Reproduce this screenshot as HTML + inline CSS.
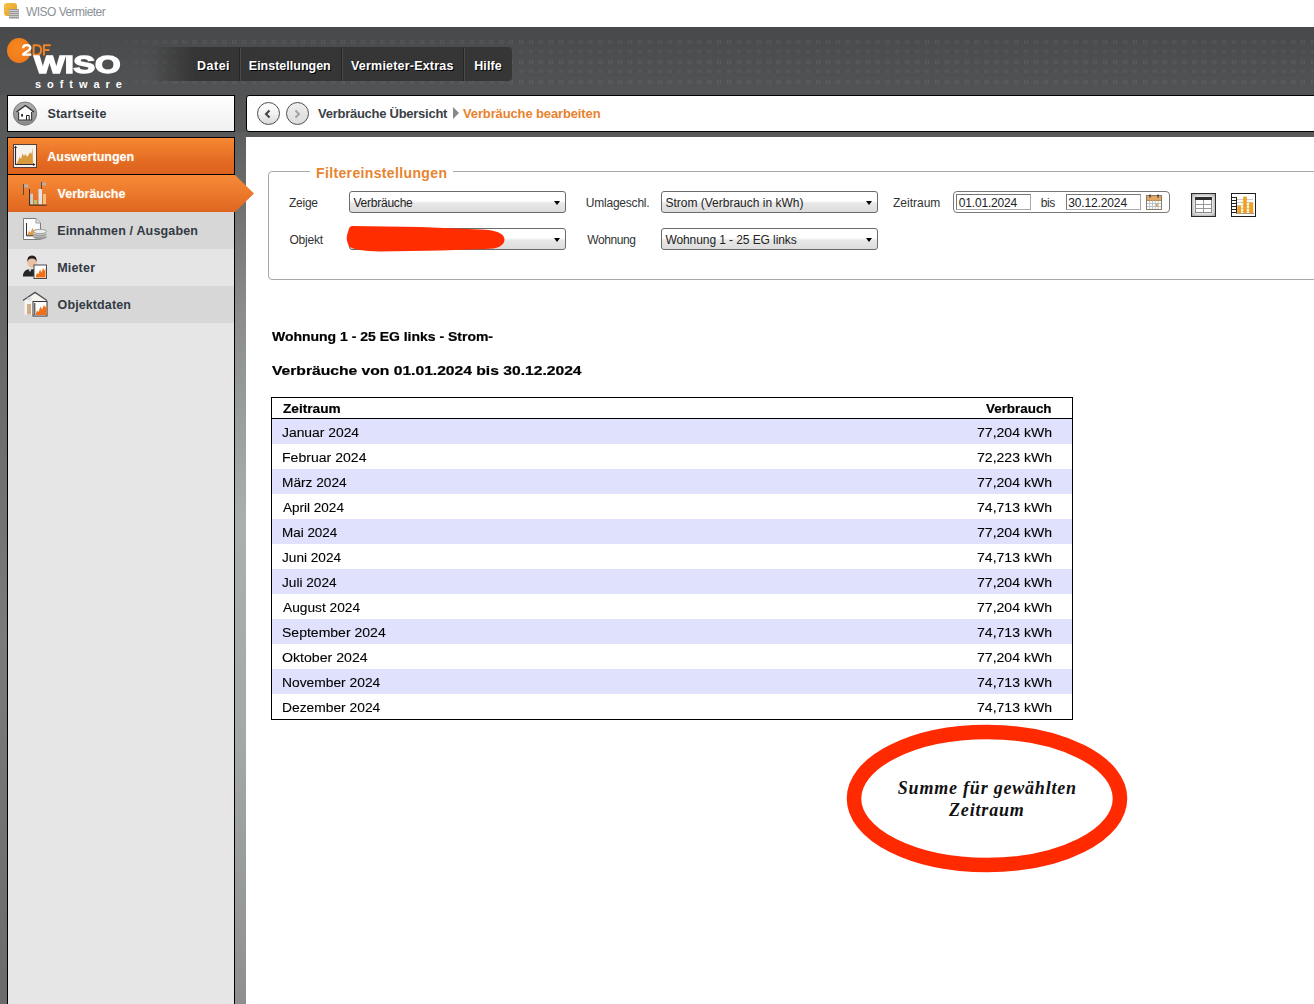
<!DOCTYPE html>
<html><head><meta charset="utf-8">
<style>
*{margin:0;padding:0;box-sizing:border-box}
html,body{width:1314px;height:1004px;overflow:hidden;background:#fff;font-family:"Liberation Sans",sans-serif}
.a{position:absolute}
.t{position:absolute;white-space:nowrap;line-height:1}
#title{left:0;top:0;width:1314px;height:27px;background:#fff}
#hdr{left:0;top:27px;width:1314px;height:110px;background:linear-gradient(#48494a,#4f5051 40%,#58595a)}
#dots{left:130px;top:38px;width:1184px;height:50px;background-image:radial-gradient(circle,rgba(255,255,255,.10) 1px,transparent 1.6px);background-size:10px 10px;opacity:.9}
#lcol{left:0;top:95px;width:8px;height:909px;background:linear-gradient(#575858,#6e7070 40%,#7a7b7b 60%,#6a6b6b)}
#gap{left:235px;top:132px;width:11px;height:872px;background:linear-gradient(#5c5d5d,#8a8c8c 20%,#abafaf 45%,#a5a8a8 70%,#8e9090)}
#side{left:7px;top:137px;width:228px;height:867px;background:#e6e6e6;border-left:1px solid #000;border-right:1px solid #000}
#content{left:246px;top:137px;width:1068px;height:867px;background:#fff}
.menu{left:150px;top:47px;width:362px;height:34px;border-radius:0 4px 4px 0;background:linear-gradient(90deg,rgba(51,51,51,0),#353535 45px,#363636);}
.msep{top:48px;width:1px;height:33px;background:#262626;box-shadow:1px 0 0 #4a4a4a}
.mi{color:#fff;font-weight:bold;font-size:13px;top:59px;text-shadow:1px 1px 0 #000}
.box{border:1px solid #000}
.sb{font-weight:bold;font-size:12.5px;color:#3a3a3a}
.lbl{font-size:12px;color:#333}
.sel{border:1px solid #6b6b6b;border-radius:3px;background:linear-gradient(#fff,#fff 45%,#e8e8e8 55%,#dcdcdc)}
.arr{width:0;height:0;border-left:3.5px solid transparent;border-right:3.5px solid transparent;border-top:4px solid #000}
.st{font-size:12px;color:#222}
.tb td{height:25px}
.cell{font-family:"Liberation Sans",sans-serif;font-size:12.5px;color:#1a1a1a}
</style></head><body>
<div id="title" class="a"></div>
<!-- app icon -->
<div class="a" style="left:4px;top:3px;width:13px;height:13px;border-radius:3px;background:linear-gradient(135deg,#f7c448,#e59a1a)"></div>
<div class="a" style="left:9px;top:9px;width:10px;height:10px;background:repeating-linear-gradient(#9a9a9a 0 1px,#c9c9c9 1px 2px)"></div>

<div id="hdr" class="a"></div>
<svg id="dots2" class="a" style="left:0;top:27px" width="1314" height="68"><defs><pattern id="dp" x="4.3" y="13" width="9.9" height="20" patternUnits="userSpaceOnUse"><rect x="0" y="0" width="1.5" height="4" fill="#fff" fill-opacity=".065"/><rect x="2.7" y="0" width="1.5" height="4" fill="#fff" fill-opacity=".065"/><rect x="0" y="10" width="4" height="3" fill="#fff" fill-opacity=".045"/></pattern><linearGradient id="dg" x1="0" x2="1" y1="0" y2="0"><stop offset="0" stop-color="#fff" stop-opacity="0"/><stop offset=".09" stop-color="#fff" stop-opacity=".25"/><stop offset=".13" stop-color="#fff" stop-opacity="1"/><stop offset="1" stop-color="#fff" stop-opacity="1"/></linearGradient><mask id="dm"><rect width="1314" height="68" fill="url(#dg)"/></mask></defs><rect x="0" y="10" width="1314" height="50" fill="url(#dp)" mask="url(#dm)"/></svg>
<!-- logo -->
<div class="a" style="left:7px;top:38px;width:24px;height:25px;border-radius:50%;background:radial-gradient(circle at 45% 40%,#f8871f,#e9761a)"></div>
<svg class="a" style="left:0;top:27px" width="60" height="40"><g transform="translate(0,-27)" fill="none" stroke-linejoin="round"><path d="M23.1 48.2 C23.1 45.9 24.6 45.2 26.7 45.2 C28.9 45.2 30.3 46.1 30.3 48.1 C30.3 50.3 27.6 51.3 25.4 52.4 C23.9 53.2 23.1 53.9 23.1 54.7 H31.3" stroke="#fff" stroke-width="2.3"/><path d="M33.6 45.3 V54.7 H36.6 C39.6 54.7 41.2 52.6 41.2 50 C41.2 47.4 39.6 45.3 36.6 45.3 Z" stroke="#f08326" stroke-width="2"/><path d="M50.8 45.3 H43.9 V55.5 M43.9 50 H49.4" stroke="#f08326" stroke-width="2"/></g></svg>
<div class="a lg" style="left:34px;top:54px;font-size:23.5px;font-weight:bold;color:#fff;line-height:1;white-space:nowrap;-webkit-text-stroke:1.3px #fff;transform:scaleX(1.40);transform-origin:0 0;letter-spacing:-.3px">WISO</div>
<div class="a lg" style="left:35px;top:79px;font-size:11px;font-weight:bold;color:#fff;line-height:1;white-space:nowrap;letter-spacing:5.95px">software</div>

<div class="a menu"></div>
<div class="a msep" style="left:239px"></div>
<div class="a msep" style="left:341px"></div>
<div class="a msep" style="left:463px"></div>

<div id="lcol" class="a"></div>
<div id="gap" class="a"></div>
<div id="side" class="a"></div>
<div id="content" class="a"></div>

<!-- Startseite -->
<div class="a box" style="left:7px;top:95px;width:228px;height:37px;background:linear-gradient(#fff,#f0f0f0)"></div>
<svg class="a" style="left:12px;top:101px" width="26" height="26"><defs><linearGradient id="hg" x1="0" y1="0" x2="0" y2="1"><stop offset="0" stop-color="#b0b0b0"/><stop offset="1" stop-color="#8a8a8a"/></linearGradient></defs><circle cx="13" cy="12.6" r="11.6" fill="url(#hg)" stroke="#7a7a7a" stroke-width="1"/><path d="M4.5 11 L13.4 4.5 L22 11" stroke="#2a2a2a" stroke-width="1.2" fill="none"/><path d="M6.5 10.5 L13.4 5.5 L20 10.5 V19 H6.5 Z" fill="#fff"/><path d="M6.6 11 V19 H19.6 V11" stroke="#3a3a3a" stroke-width="1.1" fill="none"/><rect x="9.2" y="13" width="1.8" height="2.6" fill="#222"/><path d="M14.5 19 V14.5 H17.2 V19" stroke="#222" stroke-width="1" fill="none"/></svg>

<!-- Auswertungen -->
<div class="a box" style="left:7px;top:137px;width:228px;height:38px;background:linear-gradient(#f68935,#e56c22 60%,#dc621f)"></div>
<svg class="a" style="left:13px;top:144px" width="24" height="24"><rect x="0.5" y="0.5" width="23" height="23" fill="#f6f3ee" stroke="#5a4030"/><path d="M3.5 20 L5 17 L6.5 13 L8 15 L9.5 9.5 L11 12 L12.5 10 L14 13 L15.5 11 L17 8.5 L18.5 10 L19.5 4 L20 20 Z" fill="#d99a3e"/><path d="M2.5 2.5 V20.5 H21" stroke="#2a2a3a" stroke-width="1.1" fill="none"/><path d="M1 4 L2.5 1.5 L4 4Z M20 19 L22.5 20.5 L20 22Z" fill="#2a2a3a"/></svg>

<!-- Verbräuche -->
<svg class="a" style="left:8px;top:175px" width="247" height="37"><defs><linearGradient id="og" x1="0" y1="0" x2="0" y2="1"><stop offset="0" stop-color="#f78b38"/><stop offset="1" stop-color="#e0661f"/></linearGradient></defs><path d="M0 0 H227 L246 18.5 L227 37 H0 Z" fill="url(#og)"/></svg>
<svg class="a" style="left:20px;top:180px" width="30" height="28"><path d="M3.5 4 V15" stroke="#5a4a40" stroke-width="1"/><path d="M4 4.5 H8.5 V7.5 H4Z" fill="#b8b0a8"/><path d="M21.5 2 V10" stroke="#5a4a40" stroke-width="1"/><path d="M22 2.5 H26 V5.5 H22Z" fill="#b8b0a8"/><path d="M9.5 9 V25" stroke="#3a3028" stroke-width="1"/><rect x="10.2" y="13.7" width="2.8" height="11" fill="#c4d0d4"/><rect x="14" y="20" width="3" height="4.7" fill="#a8c878"/><rect x="18.5" y="9" width="3.5" height="15.7" fill="#dfe4e6"/><rect x="23" y="14" width="3" height="10.7" fill="#f2c27a"/><path d="M9 25.2 H26.5" stroke="#5a3a20" stroke-width="1.3"/></svg>

<!-- rows -->
<div class="a" style="left:8px;top:212px;width:226px;height:37px;background:#d7d7d7"></div>
<div class="a" style="left:8px;top:249px;width:226px;height:37px;background:#e5e5e5"></div>
<div class="a" style="left:8px;top:286px;width:226px;height:37px;background:#d7d7d7"></div>
<svg class="a" style="left:22px;top:217px" width="26" height="26"><defs><linearGradient id="cg" x1="0" y1="0" x2="0" y2="1"><stop offset="0" stop-color="#e8e8e8"/><stop offset="1" stop-color="#9a9a9a"/></linearGradient></defs><path d="M1.5 1.5 H14 L18.5 6 V22.5 H1.5 Z" fill="#fbfbfb" stroke="#7a7a7a"/><path d="M14 1.5 V6 H18.5" fill="#e4e4e4" stroke="#9a9a9a"/><path d="M5 18.5 L7 14 L8.5 15.5 L10.5 11 L12 14 L13.5 12 L14.5 18.5Z" fill="#e09a48"/><path d="M4.5 6 V18.8 H15" stroke="#333" stroke-width="1" fill="none"/><path d="M11.5 14.5 V21 Q18 24.5 24.5 21 V14.5Z" fill="url(#cg)"/><ellipse cx="18" cy="14.5" rx="6.5" ry="2.2" fill="#eee" stroke="#888" stroke-width=".8"/><path d="M11.6 17.5 Q18 20.5 24.4 17.5 M11.6 20 Q18 23 24.4 20" stroke="#888" stroke-width=".8" fill="none"/></svg>
<svg class="a" style="left:22px;top:254px" width="26" height="26"><path d="M0.8 22.5 Q1.2 16 6.5 15.2 L12.5 15.2 Q14 16 14 22.5 Z" fill="#262626"/><path d="M6.5 15.2 L8 18 L9.5 15.2Z" fill="#eee"/><ellipse cx="10" cy="8.5" rx="4.6" ry="5.2" fill="#e9c2a4"/><path d="M5.2 8.5 Q4.8 1.5 10 1.6 Q15.2 1.5 14.8 8.5 Q14 4.8 10 4.6 Q6 4.8 5.2 8.5Z" fill="#2a2220"/><rect x="12" y="11" width="12.5" height="13.5" fill="#fff" stroke="#4a4a4a"/><path d="M13.5 23.5 L15 19 L16.5 20 L18 15.5 L19.5 18.5 L21 14 L22.5 17 L23.5 13.5 V23.5Z" fill="#f07018"/></svg>
<svg class="a" style="left:22px;top:291px" width="26" height="26"><path d="M2.5 9 L13 2 L23.5 9 V23.8 H2.5 Z" fill="#f7f3ee"/><path d="M1 9.5 L13 1.3 L25 9.5" stroke="#555" stroke-width="1.4" fill="none"/><rect x="5" y="13" width="4" height="10.5" fill="#cfae86"/><rect x="5.5" y="6.5" width="4" height="3" fill="#d8dde2"/><rect x="11" y="10.5" width="14" height="14.5" fill="#fff" stroke="#333"/><path d="M12.8 12 V24" stroke="#222"/><path d="M13.5 24 L15 19.5 L16.5 21 L18.5 15.5 L20 18.5 L22 14 L23.5 16.5 L24.5 13 V24Z" fill="#f07018"/></svg>

<!-- breadcrumb -->
<div class="a box" style="left:246px;top:95px;width:1080px;height:37px;border-radius:3px;background:#fff"></div>
<div class="a" style="left:256.5px;top:101.5px;width:23.5px;height:23.5px;border-radius:50%;border:1.3px solid #4e4e4e;background:linear-gradient(#fff,#f2f2f2 50%,#d8d8d8)"></div>
<div class="a" style="left:285.5px;top:101.5px;width:23.5px;height:23.5px;border-radius:50%;border:1.3px solid #4e4e4e;background:linear-gradient(#eee,#dcdcdc)"></div>
<svg class="a" style="left:256px;top:101px" width="24" height="24"><path d="M13.5 9.5 L10 13 L13.5 16.5" stroke="#404040" stroke-width="2" fill="none"/></svg>
<svg class="a" style="left:285px;top:101px" width="24" height="24"><path d="M10.5 9.5 L14 13 L10.5 16.5" stroke="#a0a0a0" stroke-width="1.8" fill="none"/></svg>
<div class="a" style="left:453px;top:107px;width:0;height:0;border-top:6px solid transparent;border-bottom:6px solid transparent;border-left:6px solid #888"></div>

<!-- filter fieldset -->
<div class="a" style="left:268px;top:171px;width:1100px;height:109px;border:1px solid #a9a9a9;border-radius:4px"></div>
<div class="a" style="left:310px;top:165px;width:143px;height:12px;background:#fff"></div>

<div class="a sel" style="left:349px;top:191px;width:217px;height:22px"></div>
<div class="a arr" style="left:554px;top:201px"></div>
<div class="a sel" style="left:349px;top:228px;width:217px;height:22px"></div>
<div class="a arr" style="left:554px;top:238px"></div>
<svg class="a" style="left:340px;top:218px" width="170" height="40"><path d="M12 8 L80 9 L140 11.5 Q164 12 164.5 21.5 Q164 31 145 31 L100 32.5 L40 33.5 Q15 33 9 28.5 Q5 20 8 14 Q9 8 12 8 Z" fill="#ff2d00"/></svg>

<div class="a sel" style="left:661px;top:191px;width:217px;height:22px"></div>
<div class="a arr" style="left:866px;top:201px"></div>
<div class="a sel" style="left:661px;top:228px;width:217px;height:22px"></div>
<div class="a arr" style="left:866px;top:238px"></div>

<div class="a" style="left:953px;top:191px;width:217px;height:22px;border:1px solid #777;border-radius:4px;background:#fff"></div>
<div class="a" style="left:956px;top:194px;width:75px;height:16px;border:1px solid #aaa;border-top-color:#777;border-left-color:#777"></div>
<div class="a" style="left:1066px;top:194px;width:75px;height:16px;border:1px solid #aaa;border-top-color:#777;border-left-color:#777"></div>
<svg class="a" style="left:1146px;top:194px" width="16" height="16"><rect x="0.5" y="1.5" width="15" height="14" fill="#fff" stroke="#8a7a66"/><rect x="1" y="2" width="14" height="4.5" fill="#e2a563"/><path d="M1 6.5H15" stroke="#b9834a"/><path d="M1 9.5H15M1 12.5H15M3.7 6.5V15M6.5 6.5V15M9.3 6.5V15M12.1 6.5V15" stroke="#b8c4c8" stroke-width="1"/><rect x="9.8" y="10" width="2.3" height="2.5" fill="#e0a060"/><path d="M4 0.5V3.5M12 0.5V3.5" stroke="#333" stroke-width="1.3"/></svg>
<div class="a" style="left:1191px;top:193px;width:25px;height:24px;border:1px solid #2a2a2a;background:#fff;box-shadow:inset 0 0 4px 1px #9a9a9a"></div>
<svg class="a" style="left:1191px;top:193px" width="25" height="24"><rect x="4.5" y="4.5" width="16" height="15" fill="#fff" stroke="#888"/><rect x="4" y="4" width="17" height="3" fill="#2e2e2e"/><path d="M5 11.5H20M5 15.5H20M12.5 7V19" stroke="#999"/></svg>
<div class="a" style="left:1231px;top:193px;width:25px;height:24px;border:1px solid #1e1e1e;background:#fff"></div>
<svg class="a" style="left:1231px;top:193px" width="25" height="24"><path d="M5 9.5H22M5 12.5H22M5 15.5H22M5 18.5H22M5 6.5H22" stroke="#ccc"/><path d="M1 4.5H5M1 7.5H5M1 10.5H5M1 13.5H5M1 16.5H5M1 19.5H5" stroke="#222"/><path d="M5.5 4V21" stroke="#222"/><path d="M5 20.5H23" stroke="#999"/><rect x="6.3" y="12.8" width="3.7" height="7.5" fill="#f0a01e"/><rect x="12.2" y="3.7" width="3.6" height="16.6" fill="#f0a01e"/><rect x="18.1" y="9.6" width="4.1" height="10.7" fill="#f0a01e"/><path d="M11 8V20M17 8V20" stroke="#f8d890" stroke-dasharray="1 1"/></svg>

<!-- content text -->

<!-- table -->
<div class="a" style="left:271px;top:397px;width:802px;height:323px;border:1px solid #000"></div>
<div class="a" style="left:272px;top:418px;width:800px;height:1px;background:#000"></div>
<div class="a" style="left:272px;top:419px;width:800px;height:25px;background:#e0e1fc"></div>
<div class="a" style="left:272px;top:469px;width:800px;height:25px;background:#e0e1fc"></div>
<div class="a" style="left:272px;top:519px;width:800px;height:25px;background:#e0e1fc"></div>
<div class="a" style="left:272px;top:569px;width:800px;height:25px;background:#e0e1fc"></div>
<div class="a" style="left:272px;top:619px;width:800px;height:25px;background:#e0e1fc"></div>
<div class="a" style="left:272px;top:669px;width:800px;height:25px;background:#e0e1fc"></div>

<!-- ellipse -->
<svg class="a" style="left:840px;top:718px" width="300" height="160"><ellipse cx="147" cy="80.5" rx="133" ry="66.5" fill="none" stroke="#ff2a00" stroke-width="14.5"/></svg>
<div class="t" id="t0" style="left:26.00px;top:6px;font-size:12px;font-weight:normal;color:#8c9098;font-family:'Liberation Sans',sans-serif;;letter-spacing:-0.538px">WISO Vermieter</div>
<div class="t" id="t1" style="left:197.00px;top:60px;font-size:12.5px;font-weight:bold;color:#fff;font-family:'Liberation Sans',sans-serif;text-shadow:1px 1px 0 #000;letter-spacing:0.500px">Datei</div>
<div class="t" id="t2" style="left:248.80px;top:60px;font-size:12.5px;font-weight:bold;color:#fff;font-family:'Liberation Sans',sans-serif;text-shadow:1px 1px 0 #000;letter-spacing:0.000px">Einstellungen</div>
<div class="t" id="t3" style="left:351.00px;top:60px;font-size:12.5px;font-weight:bold;color:#fff;font-family:'Liberation Sans',sans-serif;text-shadow:1px 1px 0 #000;letter-spacing:0.200px">Vermieter-Extras</div>
<div class="t" id="t4" style="left:474.20px;top:60px;font-size:12.5px;font-weight:bold;color:#fff;font-family:'Liberation Sans',sans-serif;text-shadow:1px 1px 0 #000;letter-spacing:0.100px">Hilfe</div>
<div class="t" id="t5" style="left:47.40px;top:108px;font-size:12.5px;font-weight:bold;color:#333a44;font-family:'Liberation Sans',sans-serif;;letter-spacing:0.222px">Startseite</div>
<div class="t" id="t6" style="left:47.20px;top:151px;font-size:12.5px;font-weight:bold;color:#fff;font-family:'Liberation Sans',sans-serif;text-shadow:0 0 2px rgba(255,255,200,.35);letter-spacing:0.018px">Auswertungen</div>
<div class="t" id="t7" style="left:57.60px;top:188px;font-size:12.5px;font-weight:bold;color:#fff;font-family:'Liberation Sans',sans-serif;text-shadow:0 0 2px rgba(255,255,200,.35);letter-spacing:-0.033px">Verbräuche</div>
<div class="t" id="t8" style="left:57.20px;top:225px;font-size:12.5px;font-weight:bold;color:#333a44;font-family:'Liberation Sans',sans-serif;;letter-spacing:0.158px">Einnahmen / Ausgaben</div>
<div class="t" id="t9" style="left:57.20px;top:262px;font-size:12.5px;font-weight:bold;color:#333a44;font-family:'Liberation Sans',sans-serif;;letter-spacing:0.200px">Mieter</div>
<div class="t" id="t10" style="left:57.60px;top:299px;font-size:12.5px;font-weight:bold;color:#333a44;font-family:'Liberation Sans',sans-serif;;letter-spacing:0.100px">Objektdaten</div>
<div class="t" id="t11" style="left:318.00px;top:107px;font-size:13px;font-weight:bold;color:#3b3f46;font-family:'Liberation Sans',sans-serif;;letter-spacing:-0.263px">Verbräuche Übersicht</div>
<div class="t" id="t12" style="left:463.00px;top:107px;font-size:13px;font-weight:bold;color:#e8822e;font-family:'Liberation Sans',sans-serif;;letter-spacing:-0.130px">Verbräuche bearbeiten</div>
<div class="t" id="t13" style="left:316.00px;top:166px;font-size:14px;font-weight:bold;color:#e8842f;font-family:'Liberation Sans',sans-serif;;letter-spacing:0.361px">Filtereinstellungen</div>
<div class="t" id="t14" style="left:289.00px;top:197px;font-size:12px;font-weight:normal;color:#333;font-family:'Liberation Sans',sans-serif;;letter-spacing:-0.250px">Zeige</div>
<div class="t" id="t15" style="left:289.40px;top:234px;font-size:12px;font-weight:normal;color:#333;font-family:'Liberation Sans',sans-serif;;letter-spacing:-0.200px">Objekt</div>
<div class="t" id="t16" style="left:585.80px;top:197px;font-size:12px;font-weight:normal;color:#333;font-family:'Liberation Sans',sans-serif;;letter-spacing:-0.220px">Umlageschl.</div>
<div class="t" id="t17" style="left:587.20px;top:234px;font-size:12px;font-weight:normal;color:#333;font-family:'Liberation Sans',sans-serif;;letter-spacing:-0.400px">Wohnung</div>
<div class="t" id="t18" style="left:893.00px;top:197px;font-size:12px;font-weight:normal;color:#333;font-family:'Liberation Sans',sans-serif;;letter-spacing:0.000px">Zeitraum</div>
<div class="t" id="t19" style="left:1040.80px;top:197px;font-size:12px;font-weight:normal;color:#333;font-family:'Liberation Sans',sans-serif;;letter-spacing:-0.500px">bis</div>
<div class="t" id="t20" style="left:353.40px;top:197px;font-size:12px;font-weight:normal;color:#222;font-family:'Liberation Sans',sans-serif;;letter-spacing:-0.222px">Verbräuche</div>
<div class="t" id="t21" style="left:665.40px;top:197px;font-size:12px;font-weight:normal;color:#222;font-family:'Liberation Sans',sans-serif;;letter-spacing:0.000px">Strom (Verbrauch in kWh)</div>
<div class="t" id="t22" style="left:665.40px;top:234px;font-size:12px;font-weight:normal;color:#222;font-family:'Liberation Sans',sans-serif;;letter-spacing:-0.082px">Wohnung 1 - 25 EG links</div>
<div class="t" id="t23" style="left:958.80px;top:197px;font-size:12px;font-weight:normal;color:#222;font-family:'Liberation Sans',sans-serif;;letter-spacing:-0.189px">01.01.2024</div>
<div class="t" id="t24" style="left:1068.20px;top:197px;font-size:12px;font-weight:normal;color:#222;font-family:'Liberation Sans',sans-serif;;letter-spacing:-0.133px">30.12.2024</div>
<div class="t" id="t25" style="left:272.30px;top:331px;font-size:12px;font-weight:bold;color:#000;font-family:'Liberation Sans',sans-serif;-webkit-text-stroke:.2px #000;transform:scaleX(1.1644);transform-origin:0 0">Wohnung 1 - 25 EG links - Strom-</div>
<div class="t" id="t26" style="left:272.30px;top:365px;font-size:12px;font-weight:bold;color:#000;font-family:'Liberation Sans',sans-serif;-webkit-text-stroke:.2px #000;transform:scaleX(1.3033);transform-origin:0 0">Verbräuche von 01.01.2024 bis 30.12.2024</div>
<div class="t" id="t27" style="left:282.64px;top:403px;font-size:12px;font-weight:bold;color:#000;font-family:'Liberation Sans',sans-serif;-webkit-text-stroke:.2px #000;transform:scaleX(1.1373);transform-origin:0 0">Zeitraum</div>
<div class="t" id="t28" style="left:986.12px;top:403px;font-size:12px;font-weight:bold;color:#000;font-family:'Liberation Sans',sans-serif;-webkit-text-stroke:.2px #000;transform:scaleX(1.1167);transform-origin:0 0">Verbrauch</div>
<div class="t" id="t29" style="left:282.00px;top:427px;font-size:12px;font-weight:normal;color:#000;font-family:'Liberation Sans',sans-serif;-webkit-text-stroke:.1px #000;transform:scaleX(1.1552);transform-origin:0 0">Januar 2024</div>
<div class="t" id="t30" style="left:977.00px;top:427px;font-size:12px;font-weight:normal;color:#000;font-family:'Liberation Sans',sans-serif;-webkit-text-stroke:.1px #000;transform:scaleX(1.1719);transform-origin:0 0">77,204 kWh</div>
<div class="t" id="t31" style="left:282.00px;top:452px;font-size:12px;font-weight:normal;color:#000;font-family:'Liberation Sans',sans-serif;-webkit-text-stroke:.1px #000;transform:scaleX(1.1722);transform-origin:0 0">Februar 2024</div>
<div class="t" id="t32" style="left:977.00px;top:452px;font-size:12px;font-weight:normal;color:#000;font-family:'Liberation Sans',sans-serif;-webkit-text-stroke:.1px #000;transform:scaleX(1.1719);transform-origin:0 0">72,223 kWh</div>
<div class="t" id="t33" style="left:282.00px;top:477px;font-size:12px;font-weight:normal;color:#000;font-family:'Liberation Sans',sans-serif;-webkit-text-stroke:.1px #000;transform:scaleX(1.1404);transform-origin:0 0">März 2024</div>
<div class="t" id="t34" style="left:977.00px;top:477px;font-size:12px;font-weight:normal;color:#000;font-family:'Liberation Sans',sans-serif;-webkit-text-stroke:.1px #000;transform:scaleX(1.1719);transform-origin:0 0">77,204 kWh</div>
<div class="t" id="t35" style="left:283.13px;top:502px;font-size:12px;font-weight:normal;color:#000;font-family:'Liberation Sans',sans-serif;-webkit-text-stroke:.1px #000;transform:scaleX(1.1273);transform-origin:0 0">April 2024</div>
<div class="t" id="t36" style="left:977.00px;top:502px;font-size:12px;font-weight:normal;color:#000;font-family:'Liberation Sans',sans-serif;-webkit-text-stroke:.1px #000;transform:scaleX(1.1719);transform-origin:0 0">74,713 kWh</div>
<div class="t" id="t37" style="left:282.00px;top:527px;font-size:12px;font-weight:normal;color:#000;font-family:'Liberation Sans',sans-serif;-webkit-text-stroke:.1px #000;transform:scaleX(1.1200);transform-origin:0 0">Mai 2024</div>
<div class="t" id="t38" style="left:977.00px;top:527px;font-size:12px;font-weight:normal;color:#000;font-family:'Liberation Sans',sans-serif;-webkit-text-stroke:.1px #000;transform:scaleX(1.1719);transform-origin:0 0">77,204 kWh</div>
<div class="t" id="t39" style="left:282.00px;top:552px;font-size:12px;font-weight:normal;color:#000;font-family:'Liberation Sans',sans-serif;-webkit-text-stroke:.1px #000;transform:scaleX(1.1346);transform-origin:0 0">Juni 2024</div>
<div class="t" id="t40" style="left:977.00px;top:552px;font-size:12px;font-weight:normal;color:#000;font-family:'Liberation Sans',sans-serif;-webkit-text-stroke:.1px #000;transform:scaleX(1.1719);transform-origin:0 0">74,713 kWh</div>
<div class="t" id="t41" style="left:282.00px;top:577px;font-size:12px;font-weight:normal;color:#000;font-family:'Liberation Sans',sans-serif;-webkit-text-stroke:.1px #000;transform:scaleX(1.1354);transform-origin:0 0">Juli 2024</div>
<div class="t" id="t42" style="left:977.00px;top:577px;font-size:12px;font-weight:normal;color:#000;font-family:'Liberation Sans',sans-serif;-webkit-text-stroke:.1px #000;transform:scaleX(1.1719);transform-origin:0 0">77,204 kWh</div>
<div class="t" id="t43" style="left:283.14px;top:602px;font-size:12px;font-weight:normal;color:#000;font-family:'Liberation Sans',sans-serif;-webkit-text-stroke:.1px #000;transform:scaleX(1.1449);transform-origin:0 0">August 2024</div>
<div class="t" id="t44" style="left:977.00px;top:602px;font-size:12px;font-weight:normal;color:#000;font-family:'Liberation Sans',sans-serif;-webkit-text-stroke:.1px #000;transform:scaleX(1.1719);transform-origin:0 0">77,204 kWh</div>
<div class="t" id="t45" style="left:282.00px;top:627px;font-size:12px;font-weight:normal;color:#000;font-family:'Liberation Sans',sans-serif;-webkit-text-stroke:.1px #000;transform:scaleX(1.1685);transform-origin:0 0">September 2024</div>
<div class="t" id="t46" style="left:977.00px;top:627px;font-size:12px;font-weight:normal;color:#000;font-family:'Liberation Sans',sans-serif;-webkit-text-stroke:.1px #000;transform:scaleX(1.1719);transform-origin:0 0">74,713 kWh</div>
<div class="t" id="t47" style="left:282.00px;top:652px;font-size:12px;font-weight:normal;color:#000;font-family:'Liberation Sans',sans-serif;-webkit-text-stroke:.1px #000;transform:scaleX(1.1781);transform-origin:0 0">Oktober 2024</div>
<div class="t" id="t48" style="left:977.00px;top:652px;font-size:12px;font-weight:normal;color:#000;font-family:'Liberation Sans',sans-serif;-webkit-text-stroke:.1px #000;transform:scaleX(1.1719);transform-origin:0 0">77,204 kWh</div>
<div class="t" id="t49" style="left:282.00px;top:677px;font-size:12px;font-weight:normal;color:#000;font-family:'Liberation Sans',sans-serif;-webkit-text-stroke:.1px #000;transform:scaleX(1.1512);transform-origin:0 0">November 2024</div>
<div class="t" id="t50" style="left:977.00px;top:677px;font-size:12px;font-weight:normal;color:#000;font-family:'Liberation Sans',sans-serif;-webkit-text-stroke:.1px #000;transform:scaleX(1.1719);transform-origin:0 0">74,713 kWh</div>
<div class="t" id="t51" style="left:282.00px;top:702px;font-size:12px;font-weight:normal;color:#000;font-family:'Liberation Sans',sans-serif;-webkit-text-stroke:.1px #000;transform:scaleX(1.1512);transform-origin:0 0">Dezember 2024</div>
<div class="t" id="t52" style="left:977.00px;top:702px;font-size:12px;font-weight:normal;color:#000;font-family:'Liberation Sans',sans-serif;-webkit-text-stroke:.1px #000;transform:scaleX(1.1719);transform-origin:0 0">74,713 kWh</div>
<div class="t" id="t53" style="left:897.80px;top:779px;font-size:18px;font-weight:bold;color:#111;font-family:'Liberation Serif',serif;font-style:italic;letter-spacing:0.789px">Summe für gewählten</div>
<div class="t" id="t54" style="left:949.00px;top:801px;font-size:18px;font-weight:bold;color:#111;font-family:'Liberation Serif',serif;font-style:italic;letter-spacing:0.829px">Zeitraum</div>
</body></html>
